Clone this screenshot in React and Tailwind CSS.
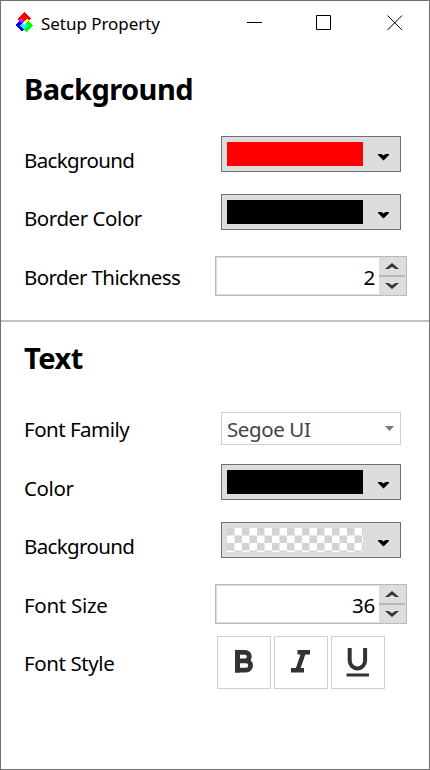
const LABEL = "whitespace-nowrap pl-[23px] text-[20.5px] leading-7 text-black";

function Logo() {
  return (
    <svg width="18" height="20" viewBox="0 0 18 20" shapeRendering="crispEdges" className="block">
      <path d="M9 0 16 7 9 13 2 7Z" fill="#f00" />
      <path d="M5.500 8 0 13 7 20 13 13.500 7 7Z" fill="#00f" />
      <path d="M12.500 8 18 13 11 20 5 13.500 11 7Z" fill="#0f0" />
      <path d="M9 9 13 13.500 9 18 5 13.500Z" fill="#0ff" />
      <path d="M4 8.500 6.500 6.500 9 9 6.500 11Z" fill="#f0f" />
      <path d="M9 9 11.500 6.500 14 8.500 11.500 11Z" fill="#ff0" />
      <path d="M9 9 11 11 9 13 7 11Z" fill="#fff" />
    </svg>
  );
}

function TitleBar() {
  return (
    <header className="flex h-[52px] pl-[14px]">
      <div className="mt-[11px]"><Logo /></div>
      <h1 className="ml-2 mt-[9px] w-[120px] whitespace-nowrap text-[17px] leading-7 tracking-[-0.04px]">Setup Property</h1>
      <svg className="ml-[86px] mt-[13px] block" width="156" height="16" viewBox="0 0 156 16" fill="none" stroke="#000">
        <path d="M0 8.500H15" />
        <path d="M69.500 1.500H83.500V15.500H69.500Z" />
        <path d="M140.500 1.500 155 16M155 1.500 140.500 16" />
      </svg>
    </header>
  );
}

function ColorPicker({ swatch, checker }) {
  return (
    <button className="ml-[5px] flex h-9 w-[180px] items-center border border-[#707070] bg-[#ddd] pl-[5px]">
      {checker ? (
        <svg width="136" height="24" className="block">
          <defs>
            <pattern id="checks" width="15" height="15" patternUnits="userSpaceOnUse">
              <rect width="15" height="15" fill="#fff" />
              <path d="M0 0H7.500V7.500H0ZM7.500 7.500H15V15H7.500Z" fill="#d3d3d3" />
            </pattern>
          </defs>
          <rect width="136" height="24" fill="url(#checks)" />
        </svg>
      ) : (
        <span className={`block h-6 w-[136px] ${swatch}`} />
      )}
      <svg width="12" height="7" viewBox="0 0 12 7" className="ml-[15px] mt-[6px] block">
        <path d="M0 0H3.500L5.500 1.500 7.500 0H11V1L5.500 6.500 0 1Z" fill="#000" />
      </svg>
    </button>
  );
}

function Spinner({ value }) {
  return (
    <div className="-ml-px flex h-10 w-[192px] border border-[#b9b9b9] bg-[#ddd] p-px">
      <span className="flex h-9 w-[162px] items-center justify-end bg-white pr-[4px] pt-[3px] text-[20.5px] tracking-[-0.2px]">{value}</span>
      <div className="flex w-[26px] flex-col items-center">
        <svg width="26" height="36" viewBox="0 0 26 36" className="block">
          <path d="M13 5 20 11H16.500L13 8.700 9.500 11H6Z" fill="#333" />
          <path d="M0 17H26V19H0Z" fill="#b9b9b9" />
          <path d="M13 31 20 25H16.500L13 27.300 9.500 25H6Z" fill="#333" />
        </svg>
      </div>
    </div>
  );
}

function Row({ label, height, text, children }) {
  return (
    <div className={`flex items-center ${height}`}>
      <div className="w-[215px] shrink-0">
        <div className={`${LABEL} ${text}`}>{label}</div>
      </div>
      {children}
    </div>
  );
}

function StyleButton({ children }) {
  return (
    <button className="flex h-[53px] w-[54px] items-center justify-center border border-[#d0d0d0] bg-white">
      <svg width="52" height="51" viewBox="0 0 52 51" fill="none" stroke="#333">{children}</svg>
    </button>
  );
}

export default function App() {
  return (
    <main className="h-[770px] w-[430px] overflow-hidden border border-[#707070] bg-white font-['Noto_Sans','Open_Sans',sans-serif] text-black">
      <TitleBar />
      <section className="h-[267px]">
        <h2 className="h-[72px] pl-[23px] pt-[16px] text-[29px] font-bold leading-[40px] tracking-[-0.55px]">Background</h2>
        <Row label="Background" height="h-[58px]" text="pt-[12px] tracking-[-0.65px]"><ColorPicker swatch="bg-[#f00]" /></Row>
        <Row label="Border Color" height="h-[58px]" text="pt-[12px] tracking-[-0.45px]"><ColorPicker swatch="bg-black" /></Row>
        <Row label="Border Thickness" height="h-[70px]" text="pt-[2px] tracking-[-0.6px]"><Spinner value="2" /></Row>
      </section>
      <section className="border-t-2 border-[#c0c0c0]">
        <h2 className="h-[76px] pl-[23px] pt-[16px] text-[29px] font-bold leading-[40px] tracking-[-0.5px]">Text</h2>
        <Row label="Font Family" height="h-[60px]" text="pt-[2px] tracking-[-0.5px]">
          <button className="ml-[5px] flex h-[33px] w-[180px] items-center justify-between border border-[#d0d0d0] pl-[5px] pr-[6px] text-[20.5px] text-[#444]">
            <span className="pt-[2px] tracking-[-0.4px]">Segoe UI</span>
            <svg width="9" height="5" viewBox="0 0 9 5"><path d="M0 0H9L4.500 5Z" fill="#777" /></svg>
          </button>
        </Row>
        <Row label="Color" height="h-[48px]" text="pt-[12px] tracking-[-0.4px]"><ColorPicker swatch="bg-black" /></Row>
        <Row label="Background" height="h-[68px]" text="pt-[12px] tracking-[-0.65px]"><ColorPicker checker /></Row>
        <Row label="Font Size" height="h-[60px]" text="pt-[2px] tracking-[-0.3px]"><Spinner value="36" /></Row>
        <Row label="Font Style" height="h-[56px]" text="pt-[2px] tracking-[-0.4px]">
          <div className="ml-px flex gap-[3px]">
            <StyleButton>
              <path d="M19.500 15.300H27A4.200 4.200 0 0 1 27 23.900H19.500M27 23.900H28A4.500 4.500 0 0 1 28 33.100H19.500V15.300" strokeWidth="4.800" strokeLinejoin="miter" />
              <path d="M17.100 12.900H21.900V35.500H17.100Z" fill="#333" stroke="none" />
            </StyleButton>
            <StyleButton>
              <path d="M22.500 15.200H35M16 33.200H29M28.700 15.200 22.500 33.200" strokeWidth="4.500" />
            </StyleButton>
            <StyleButton>
              <path d="M17.700 11V23.500A7.700 8 0 0 0 33.100 23.500V11" strokeWidth="4" />
              <path d="M14.500 38H37" strokeWidth="3" />
            </StyleButton>
          </div>
        </Row>
      </section>
    </main>
  );
}
